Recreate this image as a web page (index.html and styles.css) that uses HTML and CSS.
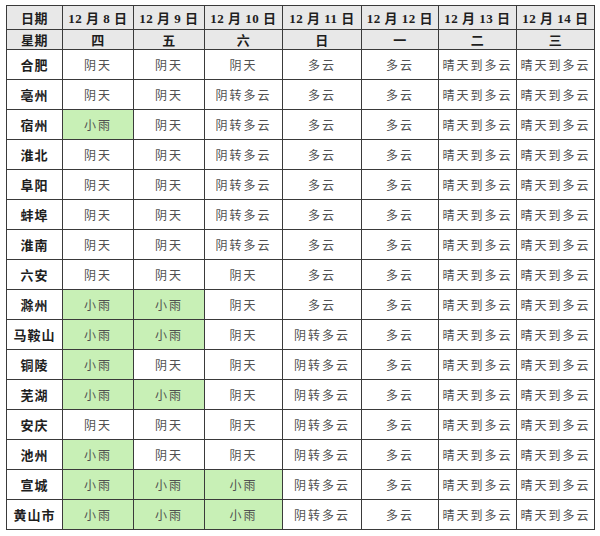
FILE: index.html
```html
<!DOCTYPE html>
<html lang="zh">
<head>
<meta charset="utf-8">
<link rel="stylesheet" href="styles.css">
</head>
<body>
<table class="weather">
<colgroup>
<col class="c0"><col class="c1"><col class="c2"><col class="c3"><col class="c4"><col class="c5"><col class="c6"><col class="c7">
</colgroup>
<thead>
<tr class="h1"><th>日期</th><th>12 月 8 日</th><th>12 月 9 日</th><th>12 月 10 日</th><th>12 月 11 日</th><th>12 月 12 日</th><th>12 月 13 日</th><th>12 月 14 日</th></tr>
<tr class="h2"><th>星期</th><th>四</th><th>五</th><th>六</th><th>日</th><th>一</th><th>二</th><th>三</th></tr>
</thead>
<tbody>
<tr><th>合肥</th><td>阴天</td><td>阴天</td><td>阴天</td><td>多云</td><td>多云</td><td>晴天到多云</td><td>晴天到多云</td></tr>
<tr><th>亳州</th><td>阴天</td><td>阴天</td><td>阴转多云</td><td>多云</td><td>多云</td><td>晴天到多云</td><td>晴天到多云</td></tr>
<tr><th>宿州</th><td class="rain">小雨</td><td>阴天</td><td>阴转多云</td><td>多云</td><td>多云</td><td>晴天到多云</td><td>晴天到多云</td></tr>
<tr><th>淮北</th><td>阴天</td><td>阴天</td><td>阴转多云</td><td>多云</td><td>多云</td><td>晴天到多云</td><td>晴天到多云</td></tr>
<tr><th>阜阳</th><td>阴天</td><td>阴天</td><td>阴转多云</td><td>多云</td><td>多云</td><td>晴天到多云</td><td>晴天到多云</td></tr>
<tr><th>蚌埠</th><td>阴天</td><td>阴天</td><td>阴转多云</td><td>多云</td><td>多云</td><td>晴天到多云</td><td>晴天到多云</td></tr>
<tr><th>淮南</th><td>阴天</td><td>阴天</td><td>阴转多云</td><td>多云</td><td>多云</td><td>晴天到多云</td><td>晴天到多云</td></tr>
<tr><th>六安</th><td>阴天</td><td>阴天</td><td>阴天</td><td>多云</td><td>多云</td><td>晴天到多云</td><td>晴天到多云</td></tr>
<tr><th>滁州</th><td class="rain">小雨</td><td class="rain">小雨</td><td>阴天</td><td>多云</td><td>多云</td><td>晴天到多云</td><td>晴天到多云</td></tr>
<tr><th>马鞍山</th><td class="rain">小雨</td><td class="rain">小雨</td><td>阴天</td><td>阴转多云</td><td>多云</td><td>晴天到多云</td><td>晴天到多云</td></tr>
<tr><th>铜陵</th><td class="rain">小雨</td><td>阴天</td><td>阴天</td><td>阴转多云</td><td>多云</td><td>晴天到多云</td><td>晴天到多云</td></tr>
<tr><th>芜湖</th><td class="rain">小雨</td><td class="rain">小雨</td><td>阴天</td><td>阴转多云</td><td>多云</td><td>晴天到多云</td><td>晴天到多云</td></tr>
<tr><th>安庆</th><td>阴天</td><td>阴天</td><td>阴天</td><td>阴转多云</td><td>多云</td><td>晴天到多云</td><td>晴天到多云</td></tr>
<tr><th>池州</th><td class="rain">小雨</td><td>阴天</td><td>阴天</td><td>阴转多云</td><td>多云</td><td>晴天到多云</td><td>晴天到多云</td></tr>
<tr><th>宣城</th><td class="rain">小雨</td><td class="rain">小雨</td><td class="rain">小雨</td><td>阴转多云</td><td>多云</td><td>晴天到多云</td><td>晴天到多云</td></tr>
<tr><th>黄山市</th><td class="rain">小雨</td><td class="rain">小雨</td><td class="rain">小雨</td><td>阴转多云</td><td>多云</td><td>晴天到多云</td><td>晴天到多云</td></tr>
</tbody>
</table>
</body>
</html>
```

FILE: styles.css
```css
html, body {
  margin: 0;
  padding: 0;
  background: #ffffff;
}

body {
  padding: 5px 0 0 6px;
  font-family: "Noto Sans CJK SC", sans-serif;
}

.weather {
  border-collapse: collapse;
  table-layout: fixed;
  width: 588px;
}

.c0 { width: 56px; }
.c1 { width: 71px; }
.c2 { width: 71px; }
.c3 { width: 78px; }
.c4 { width: 79px; }
.c5 { width: 77px; }
.c6 { width: 78px; }
.c7 { width: 78px; }

.weather th,
.weather td {
  border: 1px solid #3a3a3a;
  padding: 0;
  text-align: center;
  vertical-align: middle;
  white-space: nowrap;
  overflow: hidden;
}

.weather thead th {
  background: #e8e8e8;
  color: #1e1e1e;
  font-family: "Liberation Serif", "Noto Sans CJK SC", serif;
  font-weight: bold;
  font-size: 13px;
  letter-spacing: 0.5px;
}

.weather .h1 { height: 24px; }
.weather .h2 { height: 20px; }

.weather tbody tr { height: 30px; }

.weather tbody th {
  background: #ffffff;
  color: #1e1e1e;
  font-weight: bold;
  font-size: 13px;
  letter-spacing: 1px;
}

.weather td {
  color: #505050;
  font-size: 12px;
  letter-spacing: 2px;
  font-weight: 400;
}

.weather td.rain {
  background: #c8f0b6;
}
```
